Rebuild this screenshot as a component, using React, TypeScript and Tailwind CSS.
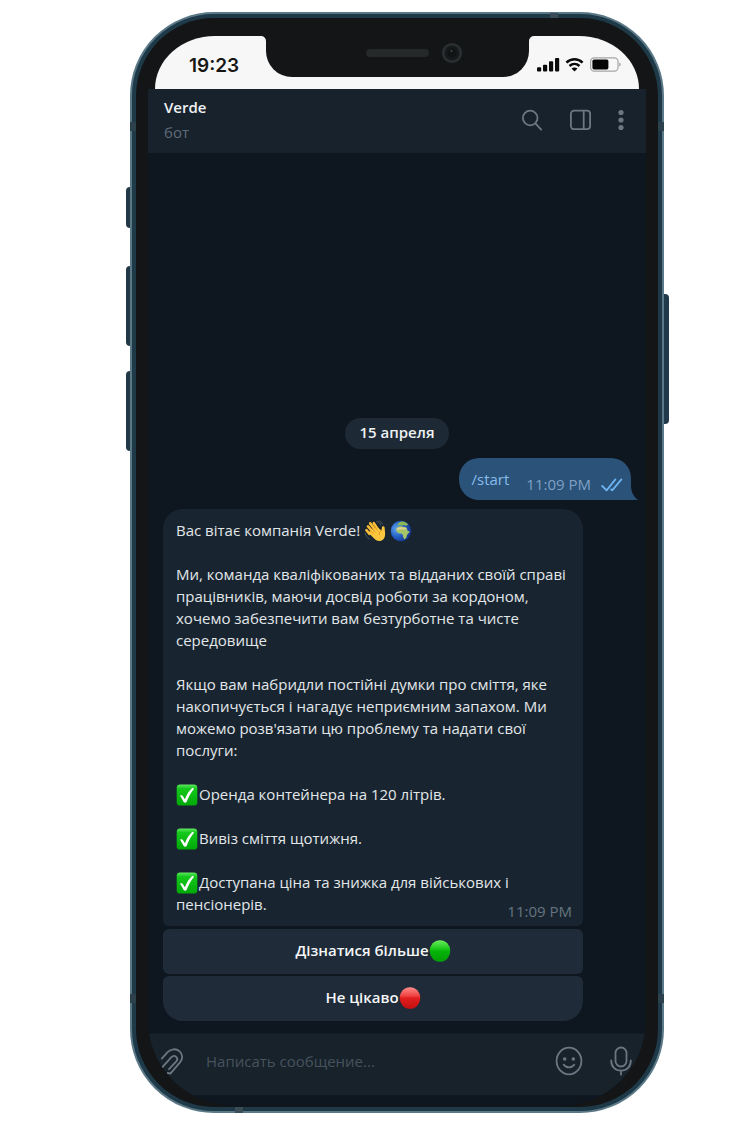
import type { ReactNode } from "react";

function WaveEmoji() {
  return (
    <svg viewBox="0 0 22 22" role="img" aria-label="Waving hand" className="-my-1 ml-1 inline-block size-[22px] align-[-2px]">
      <path d="M1.200 13.400c.6 2.600 2 4.200 4.200 5.400M12.800 1.400c2 .6 3.400 1.800 4 3.600M15.200.8c1.700.6 2.700 1.700 3.300 3.300" fill="none" stroke="#4a5560" strokeWidth="1" strokeLinecap="round" />
      <path d="M9 12 4 6.400M11.500 10.500 6.200 3.400M14 9.500 9.800 3.200M5.500 13.800 2.400 10.200" fill="none" stroke="#fbbd35" strokeWidth="2.600" strokeLinecap="round" />
      <path d="M4.400 12.800 10.600 19c2.600 2.600 6.600 2.600 8.800.2 2-2.200 1.800-4.800 1.600-7.400l-.4-4.400c-.2-1.700-2.500-1.700-2.700 0l-.4 3.100-3.700-2.700-6.300 2Z" fill="#fcc53e" />
      <path d="M6.200 10.600 9 13.400M7.600 8.200 11 12M10.200 6 13.400 10M17.500 10.500c-1.900.9-2.500 2.300-2.100 3.900" fill="none" stroke="#d98716" strokeWidth=".7" strokeLinecap="round" />
    </svg>
  );
}

function GlobeEmoji() {
  return (
    <svg viewBox="0 0 22 22" role="img" aria-label="Globe" className="-my-1 inline-block size-[22px] align-[-2px]">
      <defs>
        <radialGradient id="sea" cx=".3" cy=".4" r=".75">
          <stop offset="0" stopColor="#62a8ee" />
          <stop offset=".5" stopColor="#2560c8" />
          <stop offset="1" stopColor="#122c7c" />
        </radialGradient>
      </defs>
      <circle cx="11" cy="11" r="10.300" fill="url(#sea)" />
      <path d="M6.400 8.600c1.300-2 3-2.700 5-2.300 1.600.9 3.400.5 4.800 1l1.600 3.600 1.900.4c-.5 1.800-2.300 2.500-2.800 4.200-.3 2-1.200 3.600-2.600 3.700-1.300-.9-.9-2.700-1.500-4.100-.5-1.300-1-1.800-2.500-1.700-2 .1-3.500-1.100-4-2.600Z" fill="#a6c468" />
      <path d="M7.400 4.800c.8-2 2.800-3 5-3.200 2.500.2 4.400 1.300 5.700 3l-1.900 1.200-2.600-.9-2.300.8-1.400-.8-1.300.7Z" fill="#8db851" />
      <path d="M7 8.400c2-1.300 6-1.500 9-.3l.8 1.600c-3-.8-6.800-.4-10 .4Z" fill="#e2cf94" />
    </svg>
  );
}

function CheckEmoji() {
  return (
    <svg viewBox="0 0 22 22" role="img" aria-label="Check mark" className="-my-1 mr-px inline-block size-[22px] align-[-2px]">
      <defs>
        <linearGradient id="tick" x1="0" y1="0" x2="0" y2="1">
          <stop offset="0" stopColor="#62e862" />
          <stop offset=".2" stopColor="#14c81c" />
          <stop offset="1" stopColor="#00a808" />
        </linearGradient>
      </defs>
      <rect x=".7" y=".4" width="20.600" height="21.200" rx="3.400" fill="url(#tick)" />
      <path d="M4 11.600c1.300-.8 2.300-.5 3 .7l1.900 3c1.700-4.400 4-8.200 7.200-11.200.9-.4 1.700-.1 1.900.6-3.500 4.300-5.700 8.700-7.400 13.300-.7 1.100-2.200 1.100-2.900 0Z" fill="#fff" />
    </svg>
  );
}

function DotEmoji({ red = false }: { red?: boolean }) {
  return (
    <svg viewBox="0 0 22 22" aria-hidden="true" className="size-[22px] shrink-0">
      <defs>
        <linearGradient id="dot-green" x1="0" y1="0" x2="0" y2="1">
          <stop offset="0" stopColor="#6aee60" />
          <stop offset=".42" stopColor="#18c616" />
          <stop offset=".5" stopColor="#06b408" />
          <stop offset="1" stopColor="#029c06" />
        </linearGradient>
        <linearGradient id="dot-red" x1="0" y1="0" x2="0" y2="1">
          <stop offset="0" stopColor="#ff8e8c" />
          <stop offset=".42" stopColor="#ee3e3c" />
          <stop offset=".5" stopColor="#e01e1e" />
          <stop offset="1" stopColor="#c41010" />
        </linearGradient>
      </defs>
      <ellipse cx="11" cy="11" rx="10.300" ry="10.800" fill={red ? "url(#dot-red)" : "url(#dot-green)"} />
    </svg>
  );
}

function StatusBar() {
  return (
    <div className="mx-[7px] grid h-[53px] grid-cols-[1fr_263px_1fr] items-start rounded-tl-[60px_53px] rounded-tr-[60px_53px] bg-[#f7f7f7]">
      <div className="pt-[18px] pl-[34px] font-[Inter,sans-serif] text-[19px] leading-6 font-semibold text-[#161616]">19:23</div>
      <div className="relative flex h-[41px] items-start justify-center rounded-b-[26px] bg-[#131516]">
        <svg viewBox="0 0 5 5" aria-hidden="true" className="absolute top-0 -left-[5px] size-[5px]"><path d="M0 0h5v5A5 5 0 0 0 0 0Z" fill="#131516" /></svg>
        <svg viewBox="0 0 5 5" aria-hidden="true" className="absolute top-0 -right-[5px] size-[5px]"><path d="M5 0H0v5A5 5 0 0 1 5 0Z" fill="#131516" /></svg>
        <div className="flex items-center gap-3 pt-[6px] pl-[34px]">
          <span className="h-2 w-[63px] rounded-full bg-[#25292a]" />
          <svg viewBox="0 0 22 22" aria-hidden="true" className="size-[22px]">
            <circle cx="11" cy="11" r="8.800" fill="#171a1b" stroke="#2a2f31" strokeWidth="2.600" />
            <circle cx="11" cy="11" r="4.500" fill="#111415" />
            <circle cx="10.500" cy="9" r="1.200" fill="#343a3d" />
          </svg>
        </div>
      </div>
      <div className="flex items-center gap-[5px] pt-[21px] pl-2">
        <svg viewBox="0 0 23 15" aria-hidden="true" className="h-[15px] w-[23px]">
          <path d="M0 11.200a1 1 0 0 1 1-1h2.200a1 1 0 0 1 1 1V13.500a1 1 0 0 1-1 1H1a1 1 0 0 1-1-1ZM6 8.700a1 1 0 0 1 1-1h2.200a1 1 0 0 1 1 1v4.800a1 1 0 0 1-1 1H7a1 1 0 0 1-1-1ZM12 5.200a1 1 0 0 1 1-1h2.200a1 1 0 0 1 1 1v8.300a1 1 0 0 1-1 1H13a1 1 0 0 1-1-1ZM18 2a1 1 0 0 1 1-1h2.200a1 1 0 0 1 1 1v11.500a1 1 0 0 1-1 1H19a1 1 0 0 1-1-1Z" fill="#0a0a0a" />
        </svg>
        <svg viewBox="0 0 20 15" aria-hidden="true" className="h-[15px] w-5">
          <path d="M1.400 5.600C6.200 1.200 12.800 1.200 17.600 5.600M4.500 9c3-2.700 7-2.700 10 0" fill="none" stroke="#0a0a0a" strokeWidth="2.500" />
          <path d="M6.500 11.600c1.700-1.400 4.300-1.400 6 0l-3 3Z" fill="#0a0a0a" />
        </svg>
        <svg viewBox="0 0 32 15" aria-hidden="true" className="h-[15px] w-8">
          <rect x=".6" y=".8" width="27.400" height="13.400" rx="3.600" fill="none" stroke="#a6a6a6" strokeWidth="1.200" />
          <rect x="2.400" y="2.600" width="16" height="9.800" rx="1.600" fill="#050505" />
          <path d="M29.400 5.400c1.600.7 1.600 3.500 0 4.200Z" fill="#8e8e8e" />
        </svg>
      </div>
    </div>
  );
}

function IconButton({ label, children }: { label: string; children: ReactNode }) {
  return (
    <button type="button" aria-label={label} className="shrink-0 text-[#6b7782]">
      {children}
    </button>
  );
}

function ChatHeader() {
  return (
    <header className="flex h-16 shrink-0 items-center bg-[#18222c] pr-[22px] pb-[2px] pl-4">
      <div className="flex-1">
        <h1 className="text-[15px] leading-[25px] font-semibold text-[#eef1f3]">Verde</h1>
        <p className="text-[15px] leading-[25px] text-[#5f6c78]">бот</p>
      </div>
      <div className="flex items-center gap-[26px]">
        <IconButton label="Поиск">
          <svg viewBox="0 0 22 22" className="size-[22px]" fill="none" stroke="currentColor" strokeWidth="1.800" strokeLinecap="round">
            <circle cx="8.200" cy="9" r="7.300" />
            <path d="m13.600 14.600 5.600 6" />
          </svg>
        </IconButton>
        <IconButton label="Боковая панель">
          <svg viewBox="0 0 22 22" className="size-[22px]" fill="none" stroke="currentColor" strokeWidth="1.800">
            <rect x=".9" y="1.600" width="19.200" height="18.600" rx="3.200" />
            <path d="M13.700 1.600v18.600" />
          </svg>
        </IconButton>
        <IconButton label="Меню">
          <svg viewBox="0 0 6 22" className="h-[22px] w-[6px]" fill="currentColor">
            <circle cx="3" cy="3.500" r="2.600" />
            <circle cx="3" cy="11" r="2.600" />
            <circle cx="3" cy="18.500" r="2.600" />
          </svg>
        </IconButton>
      </div>
    </header>
  );
}

function OutgoingMessage() {
  return (
    <div className="relative mt-[9px] mr-[15px] flex h-[42px] items-start self-end rounded-[20px] rounded-br-none bg-[#2b5278] pr-2 pl-[13px]">
      <a href="#start" className="pt-[10px] text-[15px] leading-[22px] text-[#86bdec]">/start</a>
      <time className="pt-[15px] pl-[17px] text-[15px] leading-[22px] text-[#7da1c6]">11:09 PM</time>
      <svg viewBox="0 0 22 16" role="img" aria-label="Прочитано" className="mt-[19px] ml-[10px] h-4 w-[22px]" fill="none" stroke="#6cb5f2" strokeWidth="1.800" strokeLinecap="round" strokeLinejoin="round">
        <path d="m1.200 9 4.400 4.400L14.400 2.400M10.200 12.400l1 1L20.400 2.400" />
      </svg>
      <svg viewBox="0 0 7 14" aria-hidden="true" className="absolute bottom-0 left-full h-[14px] w-[7px]">
        <path d="M0 0c.2 6 2.600 10.600 7 14H0Z" fill="#2b5278" />
      </svg>
    </div>
  );
}

function BotMessage() {
  return (
    <article className="mt-[9px] rounded-t-[20px] rounded-b-md bg-[#182530] pt-[10px] pr-[11px] pb-1 pl-[13px] text-[15px] leading-[22px] text-[#e3e7ea]">
      <p className="mb-[22px]">
        Вас вітає компанія Verde!<WaveEmoji /> <GlobeEmoji />
      </p>
      <p className="mb-[22px]">
        Ми, команда кваліфікованих та відданих своїй справі<br />
        працівників, маючи досвід роботи за кордоном,<br />
        хочемо забезпечити вам безтурботне та чисте<br />
        середовище
      </p>
      <p className="mb-[22px]">
        Якщо вам набридли постійні думки про сміття, яке<br />
        накопичується і нагадує неприємним запахом. Ми<br />
        можемо розв'язати цю проблему та надати свої<br />
        послуги:
      </p>
      <p className="mb-[22px]"><CheckEmoji />Оренда контейнера на 120 літрів.</p>
      <p className="mb-[22px]"><CheckEmoji />Вивіз сміття щотижня.</p>
      <p><CheckEmoji />Доступана ціна та знижка для військових і</p>
      <div className="flex items-start justify-between">
        <p>пенсіонерів.</p>
        <time className="pt-[7px] text-[#667480]">11:09 PM</time>
      </div>
    </article>
  );
}

function Composer() {
  return (
    <form className="flex h-[62px] shrink-0 items-center border-t border-[#121c26] bg-[#18222b] pr-[13px] pb-[7px] pl-3" onSubmit={(e) => e.preventDefault()}>
      <IconButton label="Прикрепить файл">
        <svg viewBox="0 0 26 28" className="h-7 w-[26px]" fill="none" stroke="currentColor" strokeWidth="1.800" strokeLinecap="round" strokeLinejoin="round">
          <path d="M1.800 11.600 7.600 5.200C11 1.800 16 1.200 19.400 4.200c3.600 3.200 3.600 7.800.6 11.200L10.400 26.600 7.800 26" />
          <path d="M2.400 20.200 11.400 10.200c1.500-1.500 3.500-1.600 4.800-.4 1.400 1.300 1.400 3.100.1 4.600L9 22.200" />
        </svg>
      </IconButton>
      <input
        type="text"
        aria-label="Сообщение"
        placeholder="Написать сообщение..."
        className="ml-5 min-w-0 flex-1 bg-transparent text-[15px] leading-[22px] text-[#e3e7ea] outline-none placeholder:text-[#46525d]"
      />
      <div className="flex items-center gap-[26px]">
        <IconButton label="Эмодзи">
          <svg viewBox="0 0 28 30" className="h-[30px] w-7" fill="none" stroke="currentColor" strokeWidth="1.800" strokeLinecap="round">
            <ellipse cx="14" cy="15" rx="12.400" ry="13.300" />
            <circle cx="9.700" cy="13" r="1.800" fill="currentColor" stroke="none" />
            <circle cx="18.300" cy="13" r="1.800" fill="currentColor" stroke="none" />
            <path d="M8.800 18.800c2.800 3.300 7.600 3.300 10.400 0" />
          </svg>
        </IconButton>
        <IconButton label="Голосовое сообщение">
          <svg viewBox="0 0 24 30" className="h-[30px] w-6" fill="none" stroke="currentColor" strokeWidth="1.800" strokeLinecap="round">
            <rect x="6.500" y="1.500" width="11" height="19" rx="5.500" />
            <path d="M2.200 14.500c0 6.200 4 10.200 9.800 10.200s9.800-4 9.800-10.200M12 24.700v4" />
          </svg>
        </IconButton>
      </div>
    </form>
  );
}

export default function App() {
  return (
    <main className="flex min-h-screen flex-col bg-white pt-3 pr-[82px] pb-3 pl-[130px] font-['Open_Sans','Noto_Sans',sans-serif]">
      <div className="relative flex flex-1 flex-col rounded-[84px] border-2 border-[#5b7887] bg-[#1e3948] p-1">
        <span className="absolute top-[173px] -left-[6px] h-[41px] w-1 rounded-l-sm bg-[#213846]" />
        <span className="absolute top-[252px] -left-[6px] h-20 w-1 rounded-l-sm bg-[#213846]" />
        <span className="absolute top-[357px] -left-[6px] h-20 w-1 rounded-l-sm bg-[#213846]" />
        <span className="absolute top-[280px] -right-[7px] h-[130px] w-[5px] rounded-r-sm bg-[#213a4b]" />
        <span className="absolute top-[108px] -left-[2px] h-[9px] w-[6px] bg-[#2d414c]" />
        <span className="absolute top-[108px] -right-[2px] h-[9px] w-[6px] bg-[#2d414c]" />
        <span className="absolute bottom-[108px] -left-[2px] h-[9px] w-[6px] bg-[#2d414c]" />
        <span className="absolute -right-[2px] bottom-[108px] h-[9px] w-[6px] bg-[#2d414c]" />
        <span className="absolute -top-[1px] right-[104px] h-[5px] w-2 bg-[#3a4c56]" />
        <span className="absolute -bottom-[2px] left-[103px] h-[6px] w-2 bg-[#3a4c56]" />

        <div className="flex flex-1 flex-col rounded-[78px] bg-[#131516] px-3 pt-[18px] pb-px">
          <StatusBar />
          <section className="flex flex-1 flex-col overflow-hidden rounded-b-[86px] bg-[#0e1620] pb-[11px]">
            <ChatHeader />
            <div className="flex flex-1 flex-col justify-end pb-3">
              <time className="self-center rounded-full bg-[#1d2a35] px-[14px] pt-[3px] pb-[5px] text-[15px] leading-[23px] font-semibold text-[#eef1f3]">15 апреля</time>
              <OutgoingMessage />
              <div className="mr-[63px] ml-[15px] flex flex-col">
                <BotMessage />
                <button type="button" className="mt-[3px] flex h-[45px] items-center justify-center rounded-md bg-[#1f2b38] pb-[2px] text-[15px] font-semibold text-[#f4f6f7]">
                  Дізнатися більше<DotEmoji />
                </button>
                <button type="button" className="mt-[2px] flex h-[45px] items-center justify-center rounded-t-md rounded-b-[20px] bg-[#1f2b38] pb-[2px] text-[15px] font-semibold text-[#f4f6f7]">
                  Не цікаво<DotEmoji red />
                </button>
              </div>
            </div>
            <Composer />
          </section>
        </div>
      </div>
    </main>
  );
}
